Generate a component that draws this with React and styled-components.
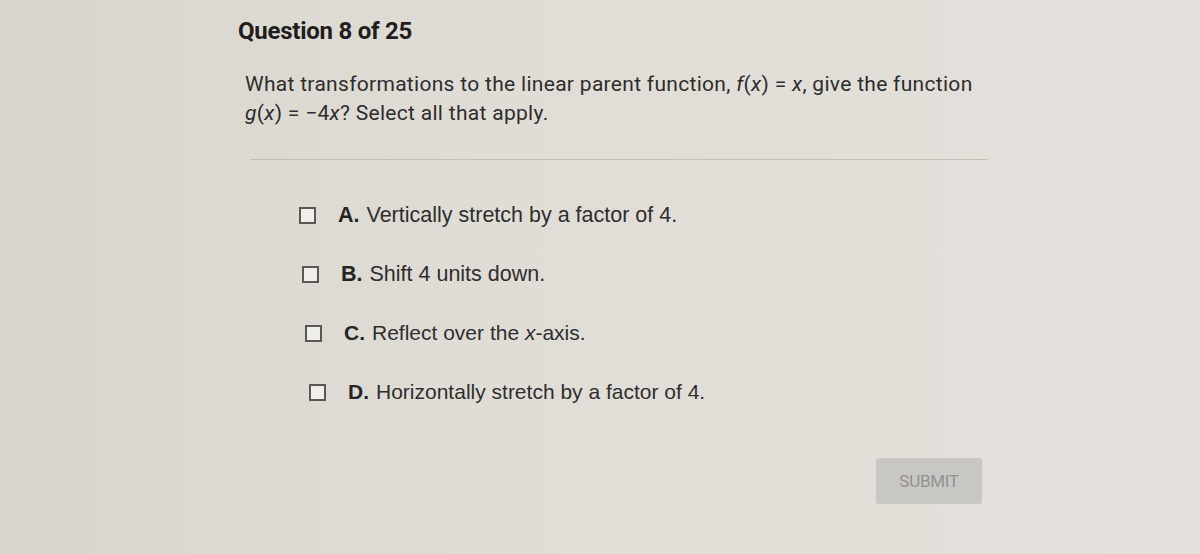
import React from 'react';
import styled, { createGlobalStyle } from 'styled-components';

const GlobalStyle = createGlobalStyle`
  html, body {
    margin: 0;
    padding: 0;
    height: 100%;
  }
  body {
    background: linear-gradient(90deg, #d8d5cf 0%, #e0ddd7 40%, #e4e1dc 100%);
    font-family: Roboto, "Liberation Sans", sans-serif;
    color: #2b2a29;
  }
`;

const Page = styled.div`
  width: 1200px;
  height: 554px;
  box-sizing: border-box;
  padding: 17px 0 0 238px;
  overflow: hidden;
`;

const Title = styled.h1`
  margin: 0;
  font-size: 24px;
  font-weight: 700;
  letter-spacing: -0.25px;
  line-height: 28px;
  color: #1f1e1d;
`;

const Prompt = styled.p`
  margin: 25px 0 0 7px;
  width: 760px;
  font-size: 21px;
  line-height: 29px;
  letter-spacing: 0.3px;
  color: #2e2d2c;

  i {
    font-style: italic;
  }
`;

const Divider = styled.hr`
  margin: 31px 0 0 12px;
  width: 738px;
  border: 0;
  border-top: 1px solid #c3bfb9;
`;

const Options = styled.ul`
  list-style: none;
  margin: 45px 0 0 0;
  padding: 0;
  display: flex;
  flex-direction: column;
  gap: 39px;
`;

const Option = styled.li`
  display: flex;
  align-items: center;
  gap: 22px;
  height: 20px;
  margin-left: ${(p) => p.$indent}px;
  font-family: "Liberation Sans", Arial, sans-serif;
  font-size: ${(p) => p.$size}px;
  color: #2f2e2d;
`;

const Box = styled.span`
  width: 13px;
  height: 13px;
  border: 2px solid #5a5855;
  background: #f0eeea;
  flex: none;
`;

const Letter = styled.b`
  margin-right: 7px;
  font-weight: 700;
  color: #262524;
`;

const Footer = styled.div`
  width: 744px;
  display: flex;
  justify-content: flex-end;
  margin-top: 56px;
`;

const Submit = styled.button`
  width: 106px;
  height: 46px;
  border: 0;
  border-radius: 3px;
  background: #c9c7c3;
  color: #939290;
  font-family: Roboto, "Liberation Sans", sans-serif;
  font-size: 17px;
  letter-spacing: -0.3px;
  text-transform: uppercase;
`;

const options = [
  { letter: 'A.', text: 'Vertically stretch by a factor of 4.', indent: 61, size: 21.5 },
  { letter: 'B.', text: 'Shift 4 units down.', indent: 64, size: 21.5 },
  { letter: 'C.', text: <>Reflect over the <i>x</i>-axis.</>, indent: 67, size: 21 },
  { letter: 'D.', text: 'Horizontally stretch by a factor of 4.', indent: 71, size: 21 },
];

export default function App() {
  return (
    <Page>
      <GlobalStyle />
      <Title>Question 8 of 25</Title>
      <Prompt>
        What transformations to the linear parent function, <i>f</i>(<i>x</i>) = <i>x</i>, give the function
        <br />
        <i>g</i>(<i>x</i>) = −4<i>x</i>? Select all that apply.
      </Prompt>
      <Divider />
      <Options>
        {options.map((o) => (
          <Option key={o.letter} $indent={o.indent} $size={o.size}>
            <Box />
            <span>
              <Letter>{o.letter}</Letter>
              {o.text}
            </span>
          </Option>
        ))}
      </Options>
      <Footer>
        <Submit>Submit</Submit>
      </Footer>
    </Page>
  );
}
